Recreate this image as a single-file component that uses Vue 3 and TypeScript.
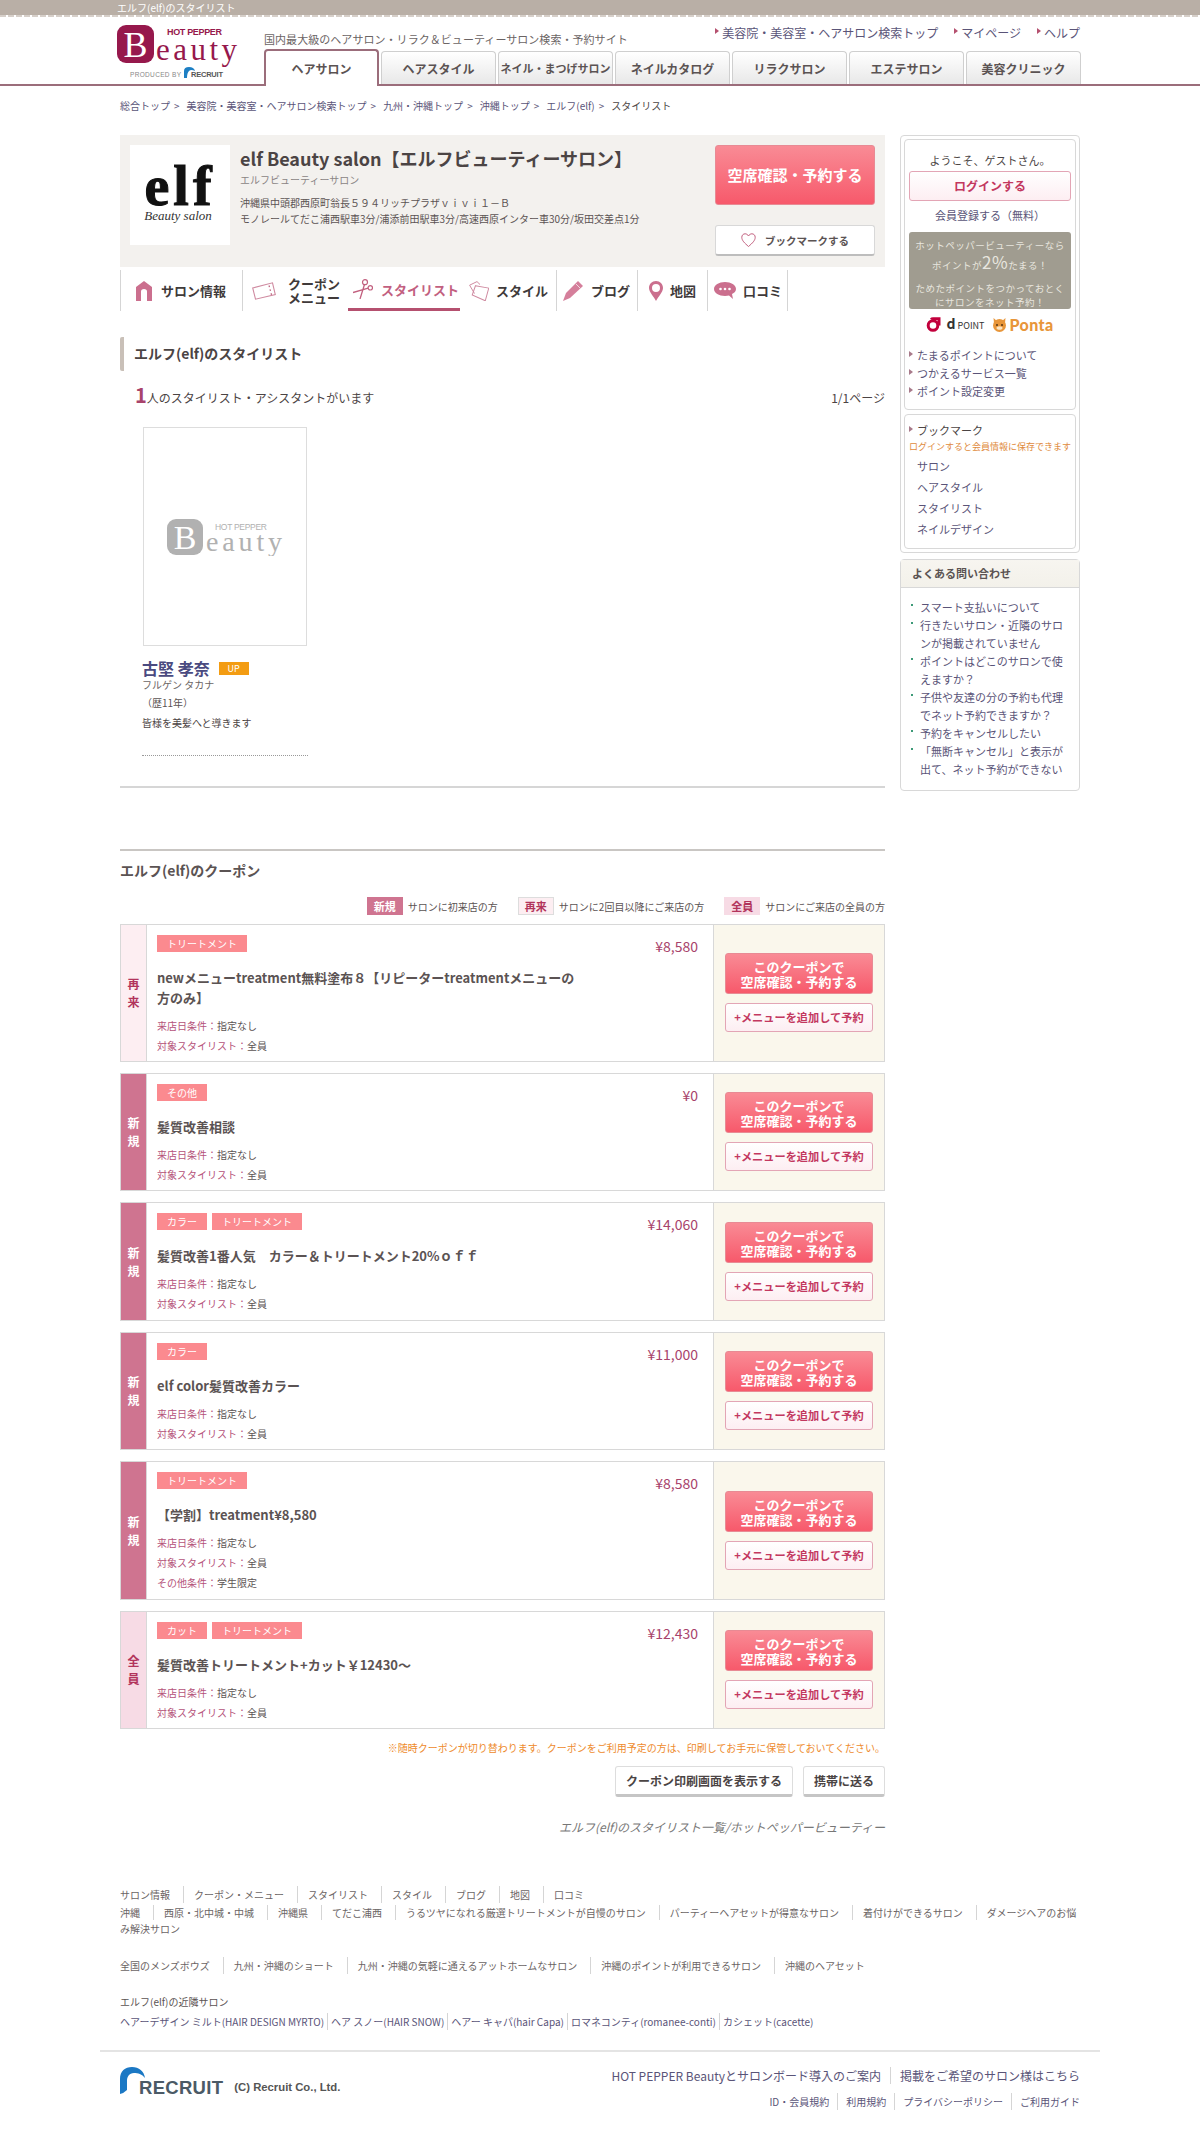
<script setup lang="ts">
interface Coupon {
  type: 'new' | 'again' | 'all'
  label: string[]
  tags: string[]
  price: string
  title: string
  other?: string
  height: number
}

const tabs = ['ヘアサロン', 'ヘアスタイル', 'ネイル・まつげサロン', 'ネイルカタログ', 'リラクサロン', 'エステサロン', '美容クリニック']
const crumbs = ['総合トップ', '美容院・美容室・ヘアサロン検索トップ', '九州・沖縄トップ', '沖縄トップ', 'エルフ(elf)']

const coupons: Coupon[] = [
  { type: 'again', label: ['再', '来'], tags: ['トリートメント'], price: '¥8,580', title: 'newメニューtreatment無料塗布８【リピーターtreatmentメニューの方のみ】', height: 138 },
  { type: 'new', label: ['新', '規'], tags: ['その他'], price: '¥0', title: '髪質改善相談', height: 118 },
  { type: 'new', label: ['新', '規'], tags: ['カラー', 'トリートメント'], price: '¥14,060', title: '髪質改善1番人気　カラー＆トリートメント20%ｏｆｆ', height: 119 },
  { type: 'new', label: ['新', '規'], tags: ['カラー'], price: '¥11,000', title: 'elf color髪質改善カラー', height: 118 },
  { type: 'new', label: ['新', '規'], tags: ['トリートメント'], price: '¥8,580', title: '【学割】treatment¥8,580', other: '学生限定', height: 139 },
  { type: 'all', label: ['全', '員'], tags: ['カット', 'トリートメント'], price: '¥12,430', title: '髪質改善トリートメント+カット￥12430～', height: 118 }
]

const footRow1 = ['サロン情報', 'クーポン・メニュー', 'スタイリスト', 'スタイル', 'ブログ', '地図', '口コミ']
const footRow2 = ['沖縄', '西原・北中城・中城', '沖縄県', 'てだこ浦西', 'うるツヤになれる厳選トリートメントが自慢のサロン', 'パーティーヘアセットが得意なサロン', '着付けができるサロン', 'ダメージヘアのお悩み解決サロン']
const footRow3 = ['全国のメンズボウズ', '九州・沖縄のショート', '九州・沖縄の気軽に通えるアットホームなサロン', '沖縄のポイントが利用できるサロン', '沖縄のヘアセット']
const nearby = ['ヘアーデザイン ミルト(HAIR DESIGN MYRTO)', 'ヘア スノー(HAIR SNOW)', 'ヘアー キャパ(hair Capa)', 'ロマネコンティ(romanee-conti)', 'カシェット(cacette)']
const faq = ['スマート支払いについて', '行きたいサロン・近隣のサロンが掲載されていません', 'ポイントはどこのサロンで使えますか？', '子供や友達の分の予約も代理でネット予約できますか？', '予約をキャンセルしたい', '「無断キャンセル」と表示が出て、ネット予約ができない']
</script>

<template>
  <div class="page">
    <div class="topbar"><span>エルフ(elf)のスタイリスト</span></div>

    <header class="head">
      <div class="head-inner">
        <svg class="logo" width="122" height="60" viewBox="0 0 122 60">
          <rect x="0" y="3" width="37" height="38" rx="9" fill="#96184c" />
          <text x="18.5" y="35" text-anchor="middle" font-size="36" font-family="Liberation Serif" fill="#fff">B</text>
          <text x="50" y="13" font-size="9" font-weight="700" font-family="Liberation Sans" fill="#96184c" textLength="55">HOT PEPPER</text>
          <text x="39" y="38" font-size="31" font-family="Liberation Serif" fill="#96184c" textLength="81" lengthAdjust="spacing">eauty</text>
          <text x="13" y="55" font-size="6.5" font-family="Liberation Sans" fill="#888" textLength="51">PRODUCED BY</text>
          <path d="M67 56 V49 Q67 45 72 45 Q77 45 78 49 Q74 47 72 49 Q70 51 70 56 Z" fill="#1d7fc4" />
          <text x="74" y="55" font-size="7.5" font-weight="700" font-family="Liberation Sans" fill="#555" textLength="32">RECRUIT</text>
        </svg>
        <div class="head-main">
          <div class="head-top">
            <p class="tagline">国内最大級のヘアサロン・リラク＆ビューティーサロン検索・予約サイト</p>
            <ul class="util">
              <li>美容院・美容室・ヘアサロン検索トップ</li>
              <li>マイページ</li>
              <li>ヘルプ</li>
            </ul>
          </div>
          <ul class="tabs">
            <li v-for="(t, i) in tabs" :key="t" :class="{ on: i === 0, tight: i === 2 }">{{ t }}</li>
          </ul>
        </div>
      </div>
    </header>

    <div class="wrap">
      <ol class="crumbs">
        <li v-for="c in crumbs" :key="c">{{ c }}<span class="gt">&gt;</span></li>
        <li>スタイリスト</li>
      </ol>

      <div class="columns">
        <main class="main">
          <section class="salon">
            <div class="salon-logo">
              <span class="elf">elf</span>
              <span class="elf-sub">Beauty salon</span>
            </div>
            <div class="salon-info">
              <h1>elf Beauty salon【エルフビューティーサロン】</h1>
              <p class="kana">エルフビューティーサロン</p>
              <p class="addr">沖縄県中頭郡西原町翁長５９４リッチプラザｖｉｖｉ１－Ｂ</p>
              <p class="addr">モノレールてだこ浦西駅車3分/浦添前田駅車3分/高速西原インター車30分/坂田交差点1分</p>
            </div>
            <div class="salon-btns">
              <a class="btn-reserve">空席確認・予約する</a>
              <a class="btn-book">
                <svg width="15" height="14" viewBox="0 0 15 14"><path d="M7.5 13.5 C3.5 10 .8 7.5 .8 4.3 C.8 2.2 2.3 .8 4.1 .8 C5.6 .8 6.8 1.7 7.5 3 C8.2 1.7 9.4 .8 10.9 .8 C12.7 .8 14.2 2.2 14.2 4.3 C14.2 7.5 11.5 10 7.5 13.5 Z" fill="none" stroke="#c2607f" stroke-width="1" /></svg>
                ブックマークする
              </a>
            </div>
          </section>

          <nav class="snav">
            <a class="n1">
              <svg width="16" height="20" viewBox="0 0 16 20"><path d="M8 0 L16 6 V20 H11 V10.5 Q11 8 8 8 Q5 8 5 10.5 V20 H0 V6 Z" fill="#cb6f8e" /></svg>
              <span>サロン情報</span>
            </a>
            <a class="n2">
              <svg width="24" height="18" viewBox="0 0 24 18"><path d="M.7 6 L20.5 .8 L23.3 12.5 L3.5 17.2 Z" fill="none" stroke="#cf8aa0" stroke-width="1.1" /><path d="M17 3.5 L19.5 13" stroke="#b5506f" stroke-width="1.1" stroke-dasharray="1.6 2.4" /></svg>
              <span class="two">クーポン<br />メニュー</span>
            </a>
            <a class="n3 on">
              <svg width="20" height="20" viewBox="0 0 20 20"><circle cx="12" cy="3.2" r="2.5" fill="none" stroke="#c2607f" stroke-width="1.2" /><circle cx="17.3" cy="8.8" r="2.2" fill="none" stroke="#c2607f" stroke-width="1.2" /><path d="M11.4 5.8 L7 20 M15.2 9.2 L0 13.5" stroke="#c2607f" stroke-width="1.3" fill="none" /></svg>
              <span>スタイリスト</span>
            </a>
            <a class="n4">
              <svg width="20" height="20" viewBox="0 0 20 20"><path d="M5.5 12.5 L.6 4.2 L8 .6 L11 3.5" fill="none" stroke="#cf8aa0" stroke-width="1" /><path d="M6 5 L19.4 6.5 L16.8 19.4 L3.4 14.6 Z" fill="none" stroke="#cf8aa0" stroke-width="1" transform="rotate(4 11 12)" /></svg>
              <span>スタイル</span>
            </a>
            <a class="n5">
              <svg width="20" height="20" viewBox="0 0 20 20"><path d="M15 0 L20 5 L7 17 L0 20 L3 12 Z" fill="#d57f9b" /><path d="M13 3 L17 7" stroke="#fff" stroke-width=".7" /></svg>
              <span>ブログ</span>
            </a>
            <a class="n6">
              <svg width="14" height="20" viewBox="0 0 14 20"><path fill-rule="evenodd" d="M7 0 C3 0 0 3 0 7 C0 11 5 16 7 20 C9 16 14 11 14 7 C14 3 11 0 7 0 Z M7 3 A4 4 0 1 1 7 11 A4 4 0 1 1 7 3 Z" fill="#cb6f8e" /></svg>
              <span>地図</span>
            </a>
            <a class="n7">
              <svg width="22" height="17" viewBox="0 0 22 17"><path d="M11 0 C5 0 0 3 0 7 C0 11 5 14 11 14 C12.5 14 14 13.8 15 13.5 L19 17 L18 12 C20.5 11 22 9 22 7 C22 3 17 0 11 0 Z" fill="#cb6f8e" /><circle cx="6.5" cy="7" r="1.3" fill="#fff" /><circle cx="11" cy="7" r="1.3" fill="#fff" /><circle cx="15.5" cy="7" r="1.3" fill="#fff" /></svg>
              <span>口コミ</span>
            </a>
          </nav>

          <h2 class="sec-title">エルフ(elf)のスタイリスト</h2>

          <div class="count-row">
            <p><em>1</em>人のスタイリスト・アシスタントがいます</p>
            <p>1/1ページ</p>
          </div>

          <div class="stylist">
            <div class="photo">
              <svg width="116" height="38" viewBox="0 0 116 38">
                <rect x="0" y="1" width="36" height="36" rx="9" fill="#b1b1b1" />
                <text x="18" y="31" text-anchor="middle" font-size="34" font-family="Liberation Serif" fill="#fff">B</text>
                <text x="48" y="12" font-size="8.5" font-family="Liberation Sans" fill="#b1b1b1" textLength="52">HOT PEPPER</text>
                <text x="39" y="33" font-size="28" font-family="Liberation Serif" fill="#b1b1b1" textLength="76" lengthAdjust="spacing">eauty</text>
              </svg>
            </div>
            <div class="name-row">
              <strong>古堅 孝奈</strong>
              <span class="up">UP</span>
            </div>
            <p class="s-kana">フルゲン タカナ</p>
            <p class="s-year">（歴11年）</p>
            <p class="s-copy">皆様を美髪へと導きます</p>
          </div>

          <hr class="rule-thick" />

          <section class="coupon-sec">
            <h2 class="coupon-title">エルフ(elf)のクーポン</h2>
            <div class="legend">
              <span class="lg new">新規</span><span class="lg-text">サロンに初来店の方</span>
              <span class="lg again">再来</span><span class="lg-text">サロンに2回目以降にご来店の方</span>
              <span class="lg all">全員</span><span class="lg-text">サロンにご来店の全員の方</span>
            </div>

            <article v-for="(c, i) in coupons" :key="i" class="coupon" :style="{ height: c.height + 'px' }">
              <div class="c-label" :class="c.type">
                <span v-for="l in c.label" :key="l">{{ l }}</span>
              </div>
              <div class="c-body">
                <div class="c-top">
                  <div class="c-tags"><span v-for="t in c.tags" :key="t" class="tag">{{ t }}</span></div>
                  <span class="price">{{ c.price }}</span>
                </div>
                <h3>{{ c.title }}</h3>
                <p class="cond"><b>来店日条件：</b>指定なし</p>
                <p class="cond"><b>対象スタイリスト：</b>全員</p>
                <p v-if="c.other" class="cond"><b>その他条件：</b>{{ c.other }}</p>
              </div>
              <div class="c-side">
                <a class="btn-coupon">このクーポンで<br />空席確認・予約する</a>
                <a class="btn-add">+メニューを追加して予約</a>
              </div>
            </article>

            <p class="note">※随時クーポンが切り替わります。クーポンをご利用予定の方は、印刷してお手元に保管しておいてください。</p>
            <div class="print-row">
              <a class="btn-plain">クーポン印刷画面を表示する</a>
              <a class="btn-plain">携帯に送る</a>
            </div>
            <p class="page-caption">エルフ(elf)のスタイリスト一覧/ホットペッパービューティー</p>
          </section>
        </main>

        <aside class="side">
          <div class="side-box">
            <div class="inner">
              <p class="welcome">ようこそ、ゲストさん。</p>
              <a class="btn-login">ログインする</a>
              <p class="register">会員登録する（無料）</p>
              <div class="point-box">
                <p>ホットペッパービューティーなら</p>
                <p class="p2">ポイントが<span>2%</span>たまる！</p>
                <p class="p3">ためたポイントをつかっておとく</p>
                <p>にサロンをネット予約！</p>
              </div>
              <div class="point-logos">
                <svg width="15" height="15" viewBox="0 0 15 15"><circle cx="7" cy="8.5" r="4.8" fill="none" stroke="#c2003c" stroke-width="3" /><path d="M4 1.5 Q5 .3 7 .3 H14.5 V8.5 H11.5 V3 H7 Q5 3 4 1.5 Z" fill="#c2003c" /></svg>
                <span class="dp"><b>d</b> POINT</span>
                <svg class="ponta-ico" width="15" height="15" viewBox="0 0 15 15"><circle cx="7.5" cy="8.5" r="6.5" fill="#e8963a" /><path d="M1.5 1 L5 4 L2 6 Z M13.5 1 L10 4 L13 6 Z" fill="#e8963a" /><circle cx="5" cy="8" r="1" fill="#5a3410" /><circle cx="10" cy="8" r="1" fill="#5a3410" /><ellipse cx="7.5" cy="11" rx="3" ry="1.8" fill="#fbe3bf" /></svg>
                <span class="ponta">Ponta</span>
              </div>
              <ul class="tri-links">
                <li>たまるポイントについて</li>
                <li>つかえるサービス一覧</li>
                <li>ポイント設定変更</li>
              </ul>
            </div>
            <div class="inner bm">
              <p class="bm-title">ブックマーク</p>
              <p class="bm-note">ログインすると会員情報に保存できます</p>
              <ul>
                <li>サロン</li>
                <li>ヘアスタイル</li>
                <li>スタイリスト</li>
                <li>ネイルデザイン</li>
              </ul>
            </div>
          </div>

          <div class="faq">
            <h3>よくある問い合わせ</h3>
            <ul>
              <li v-for="q in faq" :key="q">{{ q }}</li>
            </ul>
          </div>
        </aside>
      </div>

      <div class="foot-links">
        <ul class="sep-list"><li v-for="t in footRow1" :key="t">{{ t }}</li></ul>
        <ul class="sep-list r2"><li v-for="t in footRow2" :key="t">{{ t }}</li></ul>
        <ul class="sep-list r3"><li v-for="t in footRow3" :key="t">{{ t }}</li></ul>
        <p class="near-title">エルフ(elf)の近隣サロン</p>
        <ul class="near"><li v-for="t in nearby" :key="t">{{ t }}</li></ul>
      </div>
    </div>

    <footer class="foot">
      <div class="foot-inner">
        <div class="recruit">
          <svg width="26" height="28" viewBox="0 0 26 28"><path d="M0 27 V12 C0 4 5 0 12 0 C19 0 24 4 25 11 C22 7 18 6 14 6 C9 6 7 10 7 14 V23 Q4 26 0 27 Z" fill="#1b78c4" /></svg>
          <span class="rc-word">RECRUIT</span>
          <span class="rc-copy">(C) Recruit Co., Ltd.</span>
        </div>
        <div class="foot-right">
          <ul class="fr1">
            <li>HOT PEPPER Beautyとサロンボード導入のご案内</li>
            <li>掲載をご希望のサロン様はこちら</li>
          </ul>
          <ul class="fr2">
            <li>ID・会員規約</li>
            <li>利用規約</li>
            <li>プライバシーポリシー</li>
            <li>ご利用ガイド</li>
          </ul>
        </div>
      </div>
    </footer>
  </div>
</template>

<style>
html, body {
  margin: 0;
  background: #fff;
}
</style>

<style scoped>
.page {
  width: 1200px;
  height: 2141px;
  overflow: hidden;
  font-family: "Noto Sans CJK JP", "Noto Sans", sans-serif;
  color: #4b4444;
  font-size: 11px;
}
p, ul, ol, h1, h2, h3 {
  margin: 0;
  padding: 0;
  list-style: none;
}

.topbar {
  height: 15px;
  background: #b9afa6;
  position: relative;
}
.topbar::after {
  content: '';
  position: absolute;
  left: 0;
  right: 0;
  top: 15px;
  height: 2px;
  background: repeating-linear-gradient(90deg, #d6cfc9 0 6px, #fff 6px 8px);
}
.topbar span {
  display: block;
  width: 966px;
  margin: 0 auto;
  color: #fff;
  font-size: 10px;
  line-height: 15px;
}

.head {
  height: 69px;
  border-bottom: 2px solid #9b6d7b;
}
.head-inner {
  width: 966px;
  margin: 0 auto;
  height: 69px;
  display: flex;
}
.logo {
  margin-top: 7px;
  flex: none;
}
.head-main {
  margin-left: 25px;
  width: 819px;
  display: flex;
  flex-direction: column;
}
.head-top {
  height: 34px;
  display: flex;
  justify-content: space-between;
}
.tagline {
  font-size: 11px;
  letter-spacing: 0.05px;
  color: #6b6464;
  margin-top: 16px;
  line-height: 16px;
}
.util {
  display: flex;
  gap: 16px;
  margin-top: 10px;
  margin-right: 3px;
  font-size: 12px;
  line-height: 16px;
  color: #5a5478;
}
.util li {
  padding-left: 7px;
  position: relative;
}
.util li::before {
  content: '';
  position: absolute;
  left: 0;
  top: 3px;
  border-left: 4px solid #b5506f;
  border-top: 3.5px solid transparent;
  border-bottom: 3.5px solid transparent;
}
.tabs {
  display: flex;
  gap: 2px;
  height: 35px;
}
.tabs li {
  width: 115px;
  height: 33px;
  box-sizing: border-box;
  margin-top: 2px;
  border: 1px solid #cfcfcf;
  border-bottom: none;
  border-radius: 4px 4px 0 0;
  background: linear-gradient(#fff, #e8e8e8);
  text-align: center;
  line-height: 33px;
  font-size: 12px;
  font-weight: 700;
  color: #5b5353;
  white-space: nowrap;
}
.tabs li.tight {
  font-size: 11px;
}
.tabs li.on {
  height: 37px;
  margin-top: 0;
  margin-bottom: -2px;
  border: 2px solid #9b6d7b;
  border-bottom: none;
  background: #fff;
  line-height: 35px;
  position: relative;
  z-index: 1;
}

.wrap {
  width: 960px;
  margin: 0 auto;
}
.crumbs {
  display: flex;
  gap: 7px;
  height: 49px;
  box-sizing: border-box;
  padding-top: 12px;
  font-size: 10px;
  line-height: 15px;
  color: #5a5478;
}
.crumbs li:last-child {
  color: #4b4444;
}
.gt {
  margin-left: 4px;
}

.columns {
  display: flex;
  gap: 15px;
}
.main {
  width: 765px;
  flex: none;
}

.salon {
  height: 132px;
  background: #f3f1ee;
  display: flex;
  padding: 10px;
  box-sizing: border-box;
}
.salon-logo {
  width: 100px;
  height: 100px;
  background: #fff;
  flex: none;
  display: flex;
  flex-direction: column;
  align-items: center;
  padding-top: 19px;
  box-sizing: border-box;
}
.elf {
  font-family: "Liberation Serif", serif;
  font-weight: 700;
  font-size: 56px;
  line-height: 44px;
  color: #111;
  letter-spacing: 4px;
  -webkit-text-stroke: 1px #111;
}
.elf-sub {
  font-family: "Liberation Serif", serif;
  font-style: italic;
  font-size: 13px;
  line-height: 16px;
  color: #333;
  margin-top: 0;
  margin-left: -4px;
}
.salon-info {
  margin-left: 10px;
  flex: 1;
}
.salon-info h1 {
  font-size: 18px;
  line-height: 26px;
  font-weight: 700;
  color: #4b4444;
  white-space: nowrap;
}
.kana {
  font-size: 10px;
  line-height: 15px;
  color: #8a8484;
  margin-top: 1px;
  margin-bottom: 8px;
}
.addr {
  font-size: 10px;
  line-height: 15.5px;
  color: #5b5353;
  white-space: nowrap;
}
.salon-btns {
  width: 160px;
  flex: none;
  display: flex;
  flex-direction: column;
  justify-content: flex-start;
}
.btn-reserve {
  height: 60px;
  border-radius: 3px;
  border: 1px solid #e88a94;
  background: linear-gradient(#f98b95, #f7596b);
  color: #fff;
  font-size: 15px;
  font-weight: 700;
  text-align: center;
  line-height: 58px;
  box-sizing: border-box;
}
.btn-book {
  margin-top: 20px;
  height: 31px;
  background: #fff;
  border: 1px solid #d8d8d8;
  border-bottom: 2px solid #bdbdbd;
  border-radius: 3px;
  box-sizing: border-box;
  display: flex;
  align-items: center;
  justify-content: center;
  gap: 9px;
  font-size: 10.5px;
  font-weight: 700;
  color: #5b5353;
}

.snav {
  display: flex;
  height: 41px;
  margin-top: 3px;
}
.snav a {
  display: flex;
  align-items: center;
  box-sizing: border-box;
  height: 41px;
  border-left: 1px solid #d5d5d5;
  font-size: 13px;
  font-weight: 700;
  color: #403a3a;
  white-space: nowrap;
}
.snav .n1 { width: 122px; padding-left: 15px; gap: 9px; }
.snav .n2 { width: 106px; padding-left: 9px; gap: 12px; }
.snav .n3 { width: 112px; padding-left: 5px; gap: 8px; border-left: none; border-bottom: 3px solid #b5506f; color: #c2607f; }
.snav .n4 { width: 96px; padding-left: 9px; gap: 7px; border-left: none; }
.snav .n5 { width: 81px; padding-left: 6px; gap: 8px; }
.snav .n6 { width: 70px; padding-left: 11px; gap: 7px; }
.snav .n7 { width: 81px; padding-left: 6px; gap: 7px; border-right: 1px solid #d5d5d5; }
.snav .two {
  line-height: 14px;
}

.sec-title {
  margin-top: 26px;
  height: 34px;
  border-left: 4px solid #c9c0b8;
  border-radius: 2px;
  padding-left: 10px;
  font-size: 14px;
  line-height: 33px;
  font-weight: 700;
  color: #4b4444;
}

.count-row {
  display: flex;
  justify-content: space-between;
  align-items: flex-end;
  height: 24px;
  margin-top: 11px;
  padding-left: 15px;
  font-size: 12px;
  line-height: 17px;
}
.count-row em {
  font-style: normal;
  font-size: 20px;
  line-height: 20px;
  font-weight: 700;
  color: #a8436b;
}

.stylist {
  margin-top: 21px;
  margin-left: 22px;
  width: 166px;
  height: 359px;
  box-sizing: border-box;
  position: relative;
}
.stylist::after {
  content: '';
  position: absolute;
  left: 0;
  right: 0;
  bottom: 30px;
  border-bottom: 1px dotted #999;
}
.photo {
  width: 164px;
  height: 219px;
  margin-left: 1px;
  box-sizing: border-box;
  border: 1px solid #ddd;
  display: flex;
  align-items: center;
  justify-content: center;
}
.name-row {
  margin-top: 12px;
  display: flex;
  align-items: center;
  gap: 9px;
}
.name-row strong {
  font-size: 16px;
  line-height: 20px;
  color: #4a4a80;
}
.up {
  width: 30px;
  height: 13px;
  background: #f39c12;
  color: #fff;
  font-size: 9px;
  line-height: 13px;
  text-align: center;
}
.s-kana {
  font-size: 10px;
  line-height: 14px;
  color: #6b6464;
}
.s-year {
  font-size: 10px;
  line-height: 14px;
  margin-top: 4px;
  color: #5b5353;
}
.s-copy {
  font-size: 10px;
  line-height: 14px;
  margin-top: 6px;
  color: #4b4444;
}

.rule-thick {
  border: none;
  border-top: 2px solid #d6d6d6;
  margin: 0;
}

.coupon-sec {
  margin-top: 61px;
  border-top: 2px solid #c9c6c3;
}
.coupon-title {
  font-size: 14px;
  font-weight: 700;
  line-height: 20px;
  margin-top: 9px;
  color: #5b5353;
}
.legend {
  display: flex;
  justify-content: flex-end;
  align-items: center;
  margin-top: 17px;
  margin-bottom: 9px;
  height: 18px;
  font-size: 10px;
}
.lg {
  width: 36px;
  height: 18px;
  box-sizing: border-box;
  font-weight: 700;
  text-align: center;
  line-height: 18px;
  font-size: 11px;
}
.lg.new { background: #cf7490; color: #fff; }
.lg.again { background: #fdeef2; color: #b2345c; border: 1px solid #ddd; line-height: 16px; }
.lg.all { background: #f7dbe5; color: #b2345c; }
.lg-text {
  margin-left: 5px;
  margin-right: 20px;
  color: #5b5353;
}
.lg-text:last-child {
  margin-right: 0;
}

.coupon {
  display: flex;
  box-sizing: border-box;
  border: 1px solid #d8d8d8;
  margin-bottom: 11px;
}
.c-label {
  width: 25px;
  flex: none;
  display: flex;
  flex-direction: column;
  align-items: center;
  justify-content: center;
  font-size: 12px;
  line-height: 18px;
  font-weight: 700;
  border-right: 1px solid #d8d8d8;
}
.c-label.new { background: #cf7490; color: #fff; }
.c-label.again { background: #fdeef2; color: #b2345c; }
.c-label.all { background: #f7dbe5; color: #b2345c; }
.c-body {
  flex: 1;
  padding: 10px 15px 0 10px;
  min-width: 0;
}
.c-top {
  display: flex;
  justify-content: space-between;
  height: 17px;
}
.c-tags {
  display: flex;
  gap: 5px;
}
.tag {
  height: 17px;
  padding: 0 10px;
  background: #fb8a8f;
  color: #fff;
  font-size: 10px;
  line-height: 17px;
}
.price {
  font-size: 14px;
  line-height: 22px;
  color: #a8436b;
}
.c-body h3 {
  margin-top: 16px;
  margin-bottom: 8px;
  max-width: 425px;
  font-size: 13px;
  line-height: 20px;
  font-weight: 700;
  color: #5b5353;
}
.cond {
  font-size: 10px;
  line-height: 20px;
  color: #5b5353;
}
.cond b {
  font-weight: 400;
  color: #b5527a;
}
.c-side {
  width: 171px;
  flex: none;
  background: #faf7ec;
  border-left: 1px solid #d8d8d8;
  box-sizing: border-box;
  padding: 0 11px 1px;
  display: flex;
  flex-direction: column;
  justify-content: center;
  gap: 9px;
}
.btn-coupon {
  height: 41px;
  box-sizing: border-box;
  border: 1px solid #e88a94;
  border-radius: 3px;
  background: linear-gradient(#f98b95, #f7596b);
  color: #fff;
  font-size: 13px;
  font-weight: 700;
  line-height: 15px;
  text-align: center;
  padding-top: 5px;
}
.btn-add {
  height: 29px;
  box-sizing: border-box;
  border: 1px solid #e3a5b5;
  border-radius: 3px;
  background: linear-gradient(#fff, #fdeef2);
  color: #c3385f;
  font-size: 11.2px;
  font-weight: 700;
  line-height: 27px;
  text-align: center;
}

.note {
  text-align: right;
  color: #ee8a2c;
  font-size: 10px;
  line-height: 15px;
}
.print-row {
  display: flex;
  justify-content: flex-end;
  gap: 10px;
  margin-top: 11px;
}
.btn-plain {
  height: 31px;
  padding: 0 10px;
  box-sizing: border-box;
  background: #fff;
  border: 1px solid #ddd;
  border-bottom: 3px solid #c5c5c5;
  border-radius: 3px;
  font-size: 12px;
  font-weight: 700;
  line-height: 28px;
  color: #4b4444;
}
.page-caption {
  text-align: right;
  font-style: italic;
  font-size: 12px;
  line-height: 18px;
  color: #777;
  margin-top: 21px;
}

.side {
  width: 180px;
  flex: none;
}
.side-box {
  box-sizing: border-box;
  height: 418px;
  border: 1px solid #d8d8d8;
  border-radius: 4px;
  padding: 3px;
}
.inner {
  border: 1px solid #d8d8d8;
  border-radius: 4px;
  box-sizing: border-box;
  height: 271px;
  padding: 0 4px;
}
.welcome {
  text-align: center;
  font-size: 11px;
  line-height: 16px;
  margin-top: 12px;
  color: #4b4444;
}
.btn-login {
  display: block;
  height: 30px;
  margin-top: 3px;
  box-sizing: border-box;
  border: 1px solid #e3a5b5;
  border-radius: 3px;
  background: linear-gradient(#fff, #fdeef2);
  text-align: center;
  color: #c3385f;
  font-size: 12px;
  font-weight: 700;
  line-height: 28px;
}
.register {
  text-align: center;
  font-size: 11px;
  line-height: 16px;
  margin-top: 6px;
  color: #5a5478;
}
.point-box {
  margin-top: 9px;
  height: 77px;
  box-sizing: border-box;
  background: #a09c90;
  border-radius: 3px;
  color: #e8e6df;
  font-size: 9.5px;
  line-height: 14px;
  letter-spacing: 0.5px;
  text-align: center;
  padding-top: 6px;
}
.p2 {
  line-height: 20px;
}
.p2 span {
  font-size: 17px;
}
.p3 {
  margin-top: 6px;
}
.point-logos {
  display: flex;
  align-items: center;
  justify-content: center;
  height: 16px;
  margin-top: 7px;
}
.dp {
  font-size: 9px;
  margin-left: 5px;
  color: #333;
}
.dp b {
  font-size: 14px;
  line-height: 14px;
}
.ponta-ico {
  margin-left: 8px;
}
.ponta {
  font-family: "Lato", "Liberation Sans", sans-serif;
  font-weight: 900;
  font-size: 16px;
  color: #e8963a;
  margin-left: 2px;
  letter-spacing: 0.4px;
}
.tri-links {
  margin-top: 14px;
}
.tri-links li {
  font-size: 11px;
  line-height: 18px;
  color: #5a5478;
  padding-left: 8px;
  position: relative;
}
.tri-links li::before, .bm-title::before {
  content: '';
  position: absolute;
  left: 0;
  top: 5px;
  border-left: 4px solid #a87a8a;
  border-top: 3.5px solid transparent;
  border-bottom: 3.5px solid transparent;
}
.inner.bm {
  margin-top: 4px;
  height: 135px;
}
.bm-title {
  font-size: 11px;
  line-height: 18px;
  padding-left: 8px;
  margin-top: 6px;
  position: relative;
  color: #4b4444;
}
.bm-note {
  font-size: 9px;
  line-height: 14px;
  color: #e08a3c;
  margin-top: 1px;
  white-space: nowrap;
}
.bm ul {
  margin-top: 2px;
}
.bm li {
  font-size: 11px;
  line-height: 21px;
  padding-left: 8px;
  color: #5a5478;
}

.faq {
  margin-top: 6px;
  border: 1px solid #d8d8d8;
  border-radius: 4px;
  box-sizing: border-box;
  height: 232px;
}
.faq h3 {
  height: 28px;
  box-sizing: border-box;
  background: linear-gradient(#f7f5f0, #f3f1ea);
  border-bottom: 1px solid #d8d8d8;
  font-size: 11px;
  font-weight: 700;
  line-height: 27px;
  padding-left: 11px;
  color: #5b5353;
}
.faq ul {
  padding: 10px 13px 0 19px;
}
.faq li {
  font-size: 11px;
  line-height: 18px;
  color: #5a5478;
  position: relative;
}
.faq li::before {
  content: '';
  position: absolute;
  left: -9px;
  top: 6px;
  width: 2px;
  height: 2px;
  background: #3d9a78;
}

.foot-links {
  margin-top: 50px;
  font-size: 10px;
  color: #6b6464;
}
.sep-list {
  display: flex;
  flex-wrap: wrap;
  line-height: 17px;
}
.sep-list li {
  padding-right: 13px;
  margin-right: 10px;
  border-right: 1px solid #d5d5d5;
}
.sep-list li:last-child {
  border-right: none;
}
.sep-list.r2 {
  display: block;
  margin-top: 2px;
  line-height: 16px;
}
.sep-list.r2 li {
  display: inline;
}
.sep-list.r3 {
  margin-top: 20px;
}
.near-title {
  margin-top: 19px;
  line-height: 17px;
  color: #5b5353;
}
.near {
  display: flex;
  margin-top: 3px;
  line-height: 17px;
  color: #5a5478;
}
.near li {
  padding-right: 3px;
  margin-right: 3px;
  border-right: 1px solid #d5d5d5;
}
.near li:last-child {
  border-right: none;
}

.foot {
  width: 1000px;
  margin: 20px auto 0;
  border-top: 2px solid #e4e4e4;
  padding-top: 15px;
}
.foot-inner {
  width: 960px;
  margin: 0 auto;
  display: flex;
  justify-content: space-between;
}
.recruit {
  display: flex;
  align-items: flex-end;
  height: 28px;
}
.rc-word {
  font-family: "Liberation Sans", sans-serif;
  font-weight: 700;
  font-size: 18.5px;
  line-height: 15px;
  letter-spacing: 0.3px;
  color: #4b5a66;
  margin-left: -7px;
}
.rc-copy {
  font-family: "Liberation Sans", sans-serif;
  font-weight: 700;
  font-size: 11.3px;
  line-height: 16px;
  color: #555;
  margin-left: 11px;
}
.foot-right {
  text-align: right;
}
.fr1, .fr2 {
  display: flex;
  justify-content: flex-end;
}
.fr1 {
  font-size: 12px;
  line-height: 17px;
  color: #5a5478;
}
.fr1 li:first-child {
  padding-right: 9px;
  margin-right: 9px;
  border-right: 1px solid #d5d5d5;
}
.fr2 {
  margin-top: 9px;
  font-size: 10px;
  line-height: 17px;
  color: #5a5478;
}
.fr2 li {
  padding: 0 8px;
  border-right: 1px solid #d5d5d5;
}
.fr2 li:last-child {
  padding-right: 0;
  border-right: none;
}
</style>
